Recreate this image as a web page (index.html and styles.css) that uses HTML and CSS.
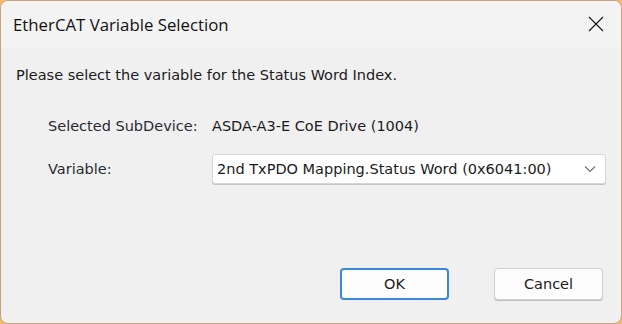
FILE: index.html
```html
<!DOCTYPE html>
<html lang="en">
<head>
    <meta charset="UTF-8">
    <title>EtherCAT Variable Selection</title>
    <link rel="stylesheet" href="styles.css">
</head>
<body>
    <div class="window">
        <div class="titlebar">
            <span class="title">EtherCAT Variable Selection</span>
            <button class="close-btn" aria-label="Close">
                <svg width="16" height="16" viewBox="0 0 16 16">
                    <path d="M1 1 L15 15 M15 1 L1 15" stroke="#1a1a1a" stroke-width="1.2" fill="none"/>
                </svg>
            </button>
        </div>

        <div class="content">
            <p class="prompt">Please select the variable for the Status Word Index.</p>

            <div class="fields">
                <span class="field-label">Selected SubDevice:</span>
                <span class="field-value">ASDA-A3-E CoE Drive (1004)</span>

                <span class="field-label">Variable:</span>
                <div class="select">
                    <span>2nd TxPDO Mapping.Status Word (0x6041:00)</span>
                    <svg width="12" height="8" viewBox="0 0 12 8">
                        <path d="M1 1.5 L6 6.5 L11 1.5" stroke="#6e6e6e" stroke-width="1.1" fill="none"/>
                    </svg>
                </div>
            </div>
        </div>

        <div class="footer">
            <button class="btn btn-default">OK</button>
            <button class="btn">Cancel</button>
        </div>
    </div>
</body>
</html>
```

FILE: styles.css
```css
* { margin: 0; padding: 0; box-sizing: border-box; }
html, body { width: 622px; height: 324px; }
body { background-color: #f4b86e; font-family: "DejaVu Sans", sans-serif; font-size: 14.5px; color: #1b1b22; overflow: hidden; }
.window { width: 622px; height: 324px; border: 1px solid #c9a27c; border-radius: 8px; background-color: #f0f0f0; display: flex; flex-direction: column; overflow: hidden; }
.titlebar { height: 46px; flex-shrink: 0; display: flex; align-items: center; justify-content: space-between; padding-left: 12px; padding-right: 17px; background-color: #f3f3f3; }
.title { font-family: "Open Sans", sans-serif; font-size: 16.8px; color: #111; }
.close-btn { border: none; background: none; width: 16px; height: 16px; display: flex; }
.content { flex: 1; padding: 19px 15px 0; }
.prompt { line-height: 18px; }
.fields { display: grid; grid-template-columns: 164px 394px; grid-template-rows: 18px 30px; align-items: center; row-gap: 19px; margin-top: 33px; padding-left: 32px; color: #2a2a30; }
.field-value { color: #1b1b22; }
.select { height: 30px; display: flex; align-items: center; justify-content: space-between; padding: 0 9px 0 4px; background-color: #fff; border: 1px solid #d6d6d6; border-radius: 3px; box-shadow: 0 1px 0 #c4c4c4; color: #1b1b22; }
.footer { display: flex; justify-content: flex-end; gap: 45px; padding: 0 18px 23px 0; }
.btn { width: 109px; height: 32px; font-family: "DejaVu Sans", sans-serif; font-size: 14.5px; color: #1b1b22; background-color: #fdfdfd; border: 1px solid #d0d0d0; border-radius: 4px; box-shadow: 0 1px 0 #bdbdbd; }
.btn-default { border: 2px solid #3b87d9; box-shadow: none; }
```
